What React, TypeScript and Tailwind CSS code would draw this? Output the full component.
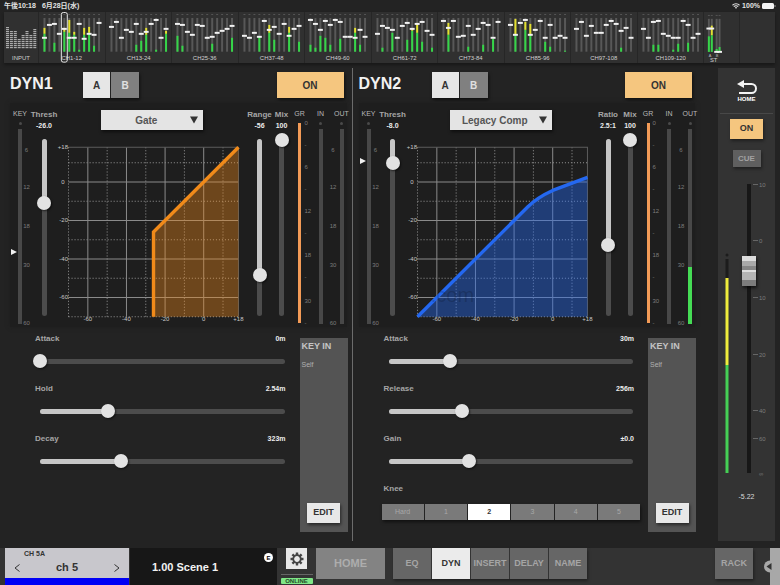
import { useId, useState } from "react";
import type { ReactNode } from "react";

type Level = [green: number, yellow?: number];

interface Bank {
  name: string;
  faders: number[];
  levels: Record<number, Level>;
}

// Fader and level values are heights above the bottom of a 34 px lane.
const banks: Bank[] = [
  { name: "CH1-12", faders: [14, 27, 28, 18, 23, 14, 14, 28, 13, 18, 17, 29], levels: { 0: [18, 24], 2: [9], 4: [20, 24], 5: [19, 32], 6: [17, 20], 7: [2], 8: [17, 24], 9: [19, 25], 10: [6] } },
  { name: "CH13-24", faders: [25, 30, 14, 22, 20, 28, 18, 20, 28, 32, 14, 23], levels: { 5: [7], 6: [11], 7: [17, 24], 9: [2], 11: [18, 21] } },
  { name: "CH25-36", faders: [28, 27, 20, 17, 27, 26, 14, 15, 19, 21, 23, 26], levels: { 0: [16], 1: [6], 7: [8], 11: [14] } },
  { name: "CH37-48", faders: [16, 14, 19, 15, 31, 22, 25, 18, 28, 16, 23, 26], levels: { 3: [15], 5: [19, 27], 6: [12], 9: [19, 25], 11: [10] } },
  { name: "CH49-60", faders: [32, 28, 22, 31, 27, 32, 30, 15, 15, 14, 22, 15], levels: { 0: [7], 1: [4], 2: [16], 3: [14], 4: [7], 6: [13], 9: [19, 24], 10: [7] } },
  { name: "CH61-72", faders: [18, 26, 24, 22, 14, 26, 29, 23, 28, 30, 21, 17], levels: { 1: [4], 3: [19], 6: [12], 7: [21, 23], 8: [19, 29], 9: [10], 11: [4] } },
  { name: "CH73-84", faders: [31, 24, 31, 15, 16, 26, 17, 23, 29, 27, 14, 30], levels: { 1: [17, 29], 5: [5], 8: [7], 10: [13] } },
  { name: "CH85-96", faders: [27, 17, 29, 32, 17, 22, 31, 14, 27, 14, 16, 14], levels: { 1: [17, 33], 3: [22, 30], 4: [17, 28], 7: [10], 8: [5], 11: [1] } },
  { name: "CH97-108", faders: [23, 30, 16, 26, 19, 19, 27, 31, 28, 21, 24, 14], levels: { 9: [4] } },
  { name: "CH109-120", faders: [23, 14, 30, 31, 18, 16, 14, 14, 31, 27, 14, 18], levels: { 2: [7], 3: [7], 6: [2], 7: [8], 9: [9] } },
];

function Lane({ x, fader, level }: { x: number; fader: number; level?: Level }) {
  const green = level ? level[0] : 0;
  const yellow = level && level[1] ? level[1] : 0;
  return (
    <g>
      <rect x={x - 1} y={2} width={2} height={1} fill="#555" />
      <rect x={x - 1} y={6} width={2} height={34} fill="#585858" />
      {yellow > 0 && <rect x={x - 1} y={40 - yellow} width={2} height={yellow - green} fill="#e3e02f" />}
      <rect x={x - 1} y={40 - green} width={2} height={green} fill="#35d648" />
      <rect x={x - 2.5} y={39 - fader} width={5} height={2} fill="#f2f2f2" />
    </g>
  );
}

function BankButton({ bank, selected }: { bank: Bank; selected?: number }) {
  return (
    <button type="button" className="flex min-w-0 flex-1 flex-col items-center border-r border-[#262626] bg-[#303030]">
      <svg viewBox="0 0 66 51" className="w-full" aria-label={bank.name}>
        {bank.faders.map((f, i) => (
          <Lane key={i} x={5.5 + i * 5} fader={f} level={bank.levels[i]} />
        ))}
        <text x="33" y="48" textAnchor="middle" fontSize="6" fill="#cfcfcf">{bank.name}</text>
        {selected !== undefined && (
          <rect x={2.5 + selected * 5} y="0.5" width="6" height="50" rx="2" fill="none" stroke="#e8e8e8" />
        )}
      </svg>
    </button>
  );
}

function InputButton() {
  const stacks = [11, 9, 9, 5, 7, 9, 7, 10];
  return (
    <button type="button" className="w-[35px] shrink-0 border-r border-[#262626] bg-[#303030]">
      <svg viewBox="0 0 34 51" className="w-full" aria-label="INPUT">
        {stacks.map((n, c) =>
          Array.from({ length: n }, (_, r) => (
            <rect key={`${c}-${r}`} x={2 + c * 3.9} y={35 - r * 2} width={3} height={1.2} fill="#aaaaaa" />
          ))
        )}
        <text x="17" y="48" textAnchor="middle" fontSize="6" fill="#cfcfcf">INPUT</text>
      </svg>
    </button>
  );
}

function StereoButton() {
  return (
    <button type="button" className="w-9 shrink-0 border-r border-[#262626] bg-[#303030]">
      <svg viewBox="0 0 36 51" className="w-full" aria-label="ST">
        <Lane x={5} fader={24} level={[16]} />
        <Lane x={8} fader={24} level={[17, 27]} />
        <Lane x={13} fader={0} level={[3]} />
        <Lane x={16} fader={0} level={[5]} />
        <text x="5" y="45" fontSize="4" fill="#bbb">A</text>
        <text x="12" y="45" fontSize="4" fill="#bbb">B</text>
        <text x="10" y="50" textAnchor="middle" fontSize="6" fill="#cfcfcf">ST</text>
      </svg>
    </button>
  );
}

function StatusBar() {
  return (
    <div className="flex h-3 items-center justify-between pr-1 pl-1 text-[7px] leading-3 font-bold text-[#e4e4e4]">
      <div className="flex gap-1.5">
        <span>午後10:18</span>
        <span>6月28日(水)</span>
      </div>
      <div className="flex items-center gap-0.5">
        <svg viewBox="0 0 16 12" className="h-1.5 w-2" fill="none" stroke="#e4e4e4" strokeWidth="2.2">
          <path d="M1 4.5a10 10 0 0 1 14 0M3.6 7.3a6.2 6.2 0 0 1 8.8 0" />
          <path d="M8 11.6 5.8 9.4a3 3 0 0 1 4.4 0z" fill="#e4e4e4" stroke="none" />
        </svg>
        <span>100%</span>
        <svg viewBox="0 0 14 6" className="h-1.5 w-3.5">
          <rect width="12" height="6" rx="1.5" fill="#f4f4f4" />
          <rect x="12.5" y="2" width="1" height="2" fill="#9a9a9a" />
        </svg>
      </div>
    </div>
  );
}

function VSlider({ id, initial }: { id: string; initial: number }) {
  const [value, setValue] = useState(initial);
  return (
    <div className="grid h-[189px] justify-items-center">
      <div className="col-start-1 row-start-1 my-1.5 w-[5px] overflow-hidden rounded-full bg-[#4c4c4c]">
        <div className="w-full bg-[#c6c6c6]" style={{ height: `${value}%` }} />
      </div>
      <input
        id={id}
        type="range"
        min={0}
        max={100}
        value={value}
        onChange={(e) => setValue(Number(e.target.value))}
        className="col-start-1 row-start-1 h-full w-3.5 appearance-none bg-transparent [writing-mode:vertical-lr] [&::-webkit-slider-thumb]:h-3.5 [&::-webkit-slider-thumb]:w-3.5 [&::-webkit-slider-thumb]:appearance-none [&::-webkit-slider-thumb]:rounded-full [&::-webkit-slider-thumb]:bg-[#e2e2e2] [&::-webkit-slider-thumb]:shadow-[1px_1px_2px_#0009]"
      />
    </div>
  );
}

function HSlider({ id, initial }: { id: string; initial: number }) {
  const [value, setValue] = useState(initial);
  return (
    <div className="grid h-3.5 items-center pr-[3px] pl-[11px]">
      <div className="col-start-1 row-start-1 h-[5px] overflow-hidden rounded-full bg-[#4c4c4c]">
        <div className="h-full bg-[#c6c6c6]" style={{ width: `${value}%` }} />
      </div>
      <input
        id={id}
        type="range"
        min={0}
        max={100}
        value={value}
        onChange={(e) => setValue(Number(e.target.value))}
        className="col-start-1 row-start-1 -mx-[7px] h-3.5 w-[calc(100%+14px)] appearance-none bg-transparent [&::-webkit-slider-thumb]:h-3.5 [&::-webkit-slider-thumb]:w-3.5 [&::-webkit-slider-thumb]:appearance-none [&::-webkit-slider-thumb]:rounded-full [&::-webkit-slider-thumb]:bg-[#e2e2e2] [&::-webkit-slider-thumb]:shadow-[1px_1px_2px_#0009]"
      />
    </div>
  );
}

function VParam({ label, value, position, width }: { label: string; value: string; position: number; width: string }) {
  const id = useId();
  return (
    <div className={`flex flex-col items-center pt-1.5 ${width}`}>
      <label htmlFor={id} className="text-[8px] leading-3 font-bold whitespace-nowrap text-[#a6a6a6]">{label}</label>
      <output htmlFor={id} className="mb-0.5 text-[7px] leading-[10px] font-bold whitespace-nowrap text-[#ececec]">{value}</output>
      <VSlider id={id} initial={position} />
    </div>
  );
}

function HParam({ label, value, position }: { label: string; value: string; position: number }) {
  const id = useId();
  return (
    <div className="flex flex-col gap-2.5">
      <div className="flex h-2.5 items-center justify-between pr-0.5 pl-1.5 font-bold">
        <label htmlFor={id} className="text-[8px] leading-[10px] text-[#a6a6a6]">{label}</label>
        <output htmlFor={id} className="text-[7px] leading-[10px] text-[#ececec]">{value}</output>
      </div>
      <HSlider id={id} initial={position} />
    </div>
  );
}

function Meter({ label, width, level = 0 }: { label: string; width: string; level?: number }) {
  return (
    <div className={`flex flex-col items-center pt-1.5 ${width}`}>
      <span className="flex w-0 justify-center text-[7px] leading-[10px] whitespace-nowrap text-[#b8b8b8]">{label}</span>
      <span className="mt-[3px] size-[3px] rounded-full bg-[#4a4a4a]" />
      <div className="mt-1 flex h-[195px] w-1 flex-col justify-end bg-[#484848]">
        <div className="bg-[#45dc55]" style={{ height: `${level}%` }} />
      </div>
    </div>
  );
}

function GainReduction() {
  return (
    <div className="flex w-2 flex-col items-center pt-1.5">
      <span className="flex w-0 justify-center text-[7px] leading-[10px] text-[#b8b8b8]">GR</span>
      <div className="mt-1 h-[200px] w-[3px] bg-[#f39b57]" />
    </div>
  );
}

// Tick captions, with y measured from the top of the meter panel.
const levelScale: [string, number][] = [["6", 47], ["12", 84], ["18", 123], ["30", 162], ["60", 220]];
const grScale: [string, number][] = [
  ["0", 20], ["-", 42], ["6", 64], ["-", 86], ["12", 108], ["-", 130], ["18", 152], ["-", 174], ["30", 198], ["-", 220],
];

function Scale({ marks, width, anchor }: { marks: [string, number][]; width: string; anchor: "start" | "middle" }) {
  return (
    <svg viewBox="0 0 8 224" className={`h-[224px] shrink-0 overflow-visible ${width}`}>
      {marks.map(([text, y]) => (
        <text key={y} x={anchor === "start" ? 0 : 4} y={y + 2} textAnchor={anchor} fontSize="6" fill="#7c7c7c">{text}</text>
      ))}
    </svg>
  );
}

const gx = (db: number) => 11.5 + (db + 70) * 1.926;
const gy = (db: number) => 5.3 + (18 - db) * 1.92;

const gateLine = `M${gx(-26)} ${gy(-70)}V${gy(-26)}L${gx(18)} ${gy(18)}`;
const compLine = `M${gx(-70)} ${gy(-70)}L${gx(-13)} ${gy(-13)}Q${gx(-8)} ${gy(-8)} ${gx(0)} ${gy(-4.4)}L${gx(18)} ${gy(2.4)}`;

function TransferGraph({ line, color, fade, watermark }: { line: string; color: string; fade: number; watermark?: string }) {
  const major = [0, -20, -40, -60];
  const minor = [10, -10, -30, -50, -70];
  const left = gx(-70);
  const right = gx(18);
  const top = gy(18);
  const bottom = gy(-70);
  return (
    <svg viewBox="0 0 190 182" className="w-full" fontSize="6" fill="#c8c8c8">
      <g stroke="#989898" strokeDasharray="1 2">
        {minor.map((db) => (
          <path key={db} fill="none" d={`M${left} ${gy(db)}H${right}M${gx(db)} ${top}V${bottom}`} />
        ))}
      </g>
      <g stroke="#8a8a8a">
        {major.map((db) => (
          <path key={db} d={`M${left} ${gy(db)}H${right}M${gx(db)} ${top}V${bottom}`} />
        ))}
        <path d={`M${left} ${top}H${right}V${bottom}`} fill="none" stroke="#5c5c5c" />
      </g>
      <path d={`${line}V${bottom}H${left}z`} fill={color} fillOpacity={fade} />
      <path d={line} fill="none" stroke={color} strokeWidth="3.4" />
      {watermark && (
        <text x="68" y="160" textAnchor="end" fontSize="20" fill="#000" fillOpacity="0.18">{watermark}</text>
      )}
      {[18, ...major].map((db) => (
        <text key={db} x={db === 0 ? 7.5 : 11} y={gy(db) + 2} textAnchor="end">{db > 0 ? `+${db}` : db}</text>
      ))}
      {[18, ...major].map((db) => (
        <text key={db} x={gx(db)} y="179" textAnchor="middle">{db > 0 ? `+${db}` : db}</text>
      ))}
    </svg>
  );
}

interface DynProps {
  title: string;
  type: string;
  keyArrow: number;
  verticals: [string, string, number][];
  horizontals: [string, string, number][];
  out: number;
  graph: ReactNode;
  children?: ReactNode;
  className?: string;
}

function DynModule({ title, type, keyArrow, verticals, horizontals, out, graph, children, className = "" }: DynProps) {
  const [thresh, second, mix] = verticals;
  return (
    <section className={`flex min-w-0 flex-1 flex-col pt-1 pb-[9px] ${className}`}>
      <header className="flex h-[26px] items-stretch pr-2 pl-1.5 font-bold">
        <h2 className="w-[73px] text-[16px] leading-6 text-[#f2f2f2]">{title}</h2>
        <div className="flex gap-px text-[10px] shadow-[1px_2px_3px_#0008]">
          <button type="button" className="w-[27px] bg-[#e6e6e6] text-[#333]">A</button>
          <button type="button" className="w-7 bg-[#808080] text-[#e0e0e0]">B</button>
        </div>
        <button type="button" className="ml-auto w-[67px] bg-[#f5c67f] text-[10px] text-[#333] shadow-[1px_2px_3px_#0008]">ON</button>
      </header>

      <div className="mt-[5px] mr-[5px] ml-1.5 flex h-[224px] bg-[#1e1e1e] shadow-[0_0_4px_#1e1e1e]">
        <svg viewBox="0 0 8 224" className="h-[224px] w-2 shrink-0">
          <path d={`M1 ${keyArrow - 3}L7 ${keyArrow}L1 ${keyArrow + 3}z`} fill="#f0f0f0" />
        </svg>
        <Meter label="KEY" width="w-1" />
        <Scale marks={levelScale} width="w-[9px]" anchor="middle" />
        <VParam label={thresh[0]} value={thresh[1]} position={thresh[2]} width="w-[26px]" />
        <div className="flex min-w-0 flex-1 flex-col items-center pt-[7px]">
          <div className="grid h-5 w-[102px] items-center bg-[#e4e4e4] shadow-[1px_2px_3px_#0008]">
            <select
              aria-label={`${title} type`}
              defaultValue={type}
              className="col-start-1 row-start-1 h-5 w-full appearance-none bg-transparent pr-3 text-[10px] font-bold text-[#555] [text-align-last:center]"
            >
              <option>Gate</option>
              <option>Legacy Comp</option>
            </select>
            <svg viewBox="0 0 8 8" className="pointer-events-none col-start-1 row-start-1 mr-[5px] size-2 justify-self-end">
              <path d="M0 0.5h8L4 7.5z" fill="#333" />
            </svg>
          </div>
          <div className="mt-3 w-full">{graph}</div>
        </div>
        <VParam label={second[0]} value={second[1]} position={second[2]} width="w-6" />
        <VParam label={mix[0]} value={mix[1]} position={mix[2]} width="mr-1 w-5" />
        <GainReduction />
        <Scale marks={grScale} width="w-[9px]" anchor="start" />
        <Meter label="IN" width="w-4" />
        <Scale marks={levelScale} width="w-2" anchor="middle" />
        <Meter label="OUT" width="w-2.5" level={out} />
      </div>

      <div className="mt-[7px] mr-1 flex flex-1 gap-[9px] pl-[25px]">
        <div className="flex min-w-0 flex-1 flex-col gap-4">
          {horizontals.map(([label, value, position]) => (
            <HParam key={label} label={label} value={value} position={position} />
          ))}
          {children}
        </div>
        <aside className="mt-1 ml-[3px] flex w-12 flex-col justify-between bg-[#545454] pb-[9px]">
          <div className="px-0.5 pt-0.5">
            <h3 className="text-[9px] leading-3 font-bold text-[#c4c4c4]">KEY IN</h3>
            <p className="mt-2 text-[7px] leading-[10px] text-[#b0b0b0]">Self</p>
          </div>
          <button type="button" className="h-5 w-[33px] self-center bg-[#e8e8e8] text-[9px] font-bold text-[#333] shadow-[1px_2px_3px_#0008]">EDIT</button>
        </aside>
      </div>
    </section>
  );
}

function Knee() {
  const [knee, setKnee] = useState("2");
  return (
    <div className="flex flex-col gap-2.5" role="group" aria-label="Knee">
      <span className="pl-1.5 text-[8px] leading-[10px] font-bold text-[#a6a6a6]">Knee</span>
      <div className="-mr-1 ml-1 flex h-4 gap-px shadow-[1px_2px_3px_#0008]">
        {["Hard", "1", "2", "3", "4", "5"].map((k) => (
          <button
            key={k}
            type="button"
            aria-pressed={k === knee}
            onClick={() => setKnee(k)}
            className={`flex-1 text-[7px] ${k === knee ? "bg-white font-bold text-[#333]" : "bg-[#7a7a7a] text-[#a8a8a8]"}`}
          >
            {k}
          </button>
        ))}
      </div>
    </div>
  );
}

const faderScale: [string, number][] = [["10", 15], ["0", 71], ["10", 128], ["20", 185], ["40", 241], ["60", 269], ["∞", 304]];

function ChannelStrip() {
  const [value, setValue] = useState(30);
  return (
    <aside className="mr-[5px] ml-[18px] flex w-[57px] shrink-0 flex-col items-center bg-[#333]">
      <button type="button" className="flex h-[46px] w-[53px] flex-col items-center border-b border-[#484848] pt-3 text-[6px] leading-[7px] font-bold text-white">
        <svg viewBox="0 0 20 15" className="mb-px h-[15px] w-5" fill="none" stroke="#f4f4f4" strokeWidth="2">
          <path d="M5 4h9.5a4.500 4.500 0 0 1 0 9H2" />
          <path d="M0 4 7 0v8z" fill="#f4f4f4" stroke="none" />
        </svg>
        HOME
      </button>
      <button type="button" className="mt-[5px] h-5 w-[33px] bg-[#f5c67f] text-[9px] font-bold text-[#333] shadow-[1px_2px_3px_#0006]">ON</button>
      <button type="button" className="mt-[11px] h-[17px] w-7 bg-[#5f5f5f] text-[8px] font-bold text-[#a2a2a2] shadow-[1px_2px_3px_#0006]">CUE</button>
      <div className="mt-0.5 flex h-[319px] w-full pl-[7px]">
        <svg viewBox="0 0 4 319" className="h-[319px] w-1 shrink-0">
          <circle cx="2" cy="86" r="1.5" fill="#1c1c1c" />
          <rect x="0.5" y="90" width="3" height="19" fill="#1c1c1c" />
          <rect x="0.5" y="109" width="3" height="87" fill="#f0ec3c" />
          <rect x="0.5" y="196" width="3" height="108" fill="#45cf55" />
        </svg>
        <div className="ml-3 grid w-4 justify-items-center">
          <div className="col-start-1 row-start-1 my-[15px] w-1 bg-[#171717]" />
          <input
            type="range"
            aria-label="Channel level"
            min={0}
            max={100}
            value={value}
            onChange={(e) => setValue(Number(e.target.value))}
            className="col-start-1 row-start-1 h-[319px] w-3.5 appearance-none bg-transparent [writing-mode:vertical-lr] [&::-webkit-slider-thumb]:h-[30px] [&::-webkit-slider-thumb]:w-3.5 [&::-webkit-slider-thumb]:appearance-none [&::-webkit-slider-thumb]:bg-[linear-gradient(#dcdcdc_0_5px,#a9a9a9_5px_10px,#868686_10px_14px,#dedede_14px_16px,#b4b4b4_16px_24px,#7c7c7c_24px)] [&::-webkit-slider-thumb]:shadow-[1px_2px_3px_#000a]"
          />
        </div>
        <svg viewBox="0 0 16 319" className="-ml-1 h-[319px] w-4 shrink-0">
          {faderScale.map(([text, y]) => (
            <g key={y}>
              {text !== "∞" && <path d={`M0 ${y}.5h5`} stroke="#666" />}
              <text x="6" y={y + 3} fontSize="6" fill="#7c7c7c">{text}</text>
            </g>
          ))}
        </svg>
      </div>
      <output className="mt-1 text-[7px] leading-[10px] text-[#dadada]">-5.22</output>
    </aside>
  );
}

function Footer() {
  const [tab, setTab] = useState("DYN");
  return (
    <footer className="flex h-[37px] shrink-0 bg-[#333] pl-[5px] font-bold">
      <div className="flex w-[124px] flex-col border-b-[7px] border-[#0000f5] bg-[#c8c7cc] text-[#333]">
        <div className="pl-[19px] text-[7px] leading-3">CH 5A</div>
        <div className="flex h-[15px] items-center justify-between px-[9px] text-[11px] leading-[15px]">
          <button type="button" aria-label="Previous channel">
            <svg viewBox="0 0 6 8" className="h-2 w-1.5" fill="none" stroke="#333"><path d="M5.5 .5 1 4l4.500 3.500" /></svg>
          </button>
          <span>ch 5</span>
          <button type="button" aria-label="Next channel">
            <svg viewBox="0 0 6 8" className="h-2 w-1.5" fill="none" stroke="#333"><path d="M.5 .5 5 4 .5 7.500" /></svg>
          </button>
        </div>
      </div>
      <button type="button" className="flex w-[148px] items-start justify-between border-l border-[#333] bg-[#171717] pr-1 pl-[22px] text-[11px] text-[#f2f2f2]">
        <span className="pt-2.5 leading-[18px]">1.00 Scene 1</span>
        <span className="mt-[5px] flex size-[9px] items-center justify-center rounded-full bg-white text-[6px] leading-none text-black">E</span>
      </button>
      <div className="ml-[3px] flex w-[33px] flex-col items-center">
        <button type="button" aria-label="Setup" className="flex h-[21px] w-[21px] shrink-0 items-center justify-center bg-[#e8e8e8]">
          <svg viewBox="-7 -7 14 14" className="size-3.5">
            {[0, 45, 90, 135, 180, 225, 270, 315].map((a) => (
              <rect key={a} x="-1.2" y="-6.500" width="2.400" height="3" fill="#444" transform={`rotate(${a})`} />
            ))}
            <circle r="3.800" fill="none" stroke="#444" strokeWidth="1.800" />
          </svg>
        </button>
        <div className="mt-[5px] h-px w-8 shrink-0 bg-[#666]" />
        <div className="mt-[3px] h-1.5 w-8 shrink-0 rounded-[1px] bg-[#7fe787] text-center text-[6px] leading-[7px] text-[#264a28]">ONLINE</div>
      </div>
      <button type="button" className="ml-[3px] h-[31px] w-[69px] bg-[#838383] text-[11px] text-[#adadad]">HOME</button>
      <nav className="ml-2 flex h-[31px] gap-px text-[9px] shadow-[1px_2px_3px_#0006]">
        {["EQ", "DYN", "INSERT", "DELAY", "NAME"].map((t) => (
          <button
            key={t}
            type="button"
            aria-pressed={t === tab}
            onClick={() => setTab(t)}
            className={`w-[38px] ${t === tab ? "bg-[#ebebeb] text-[#333]" : "bg-[#666] text-[#a5a5a5]"}`}
          >
            {t}
          </button>
        ))}
      </nav>
      <button type="button" className="mr-[11px] ml-auto h-[31px] w-[38px] bg-[#666] text-[9px] text-[#a5a5a5] shadow-[1px_2px_3px_#0006]">RACK</button>
      <button type="button" aria-label="Open side panel" className="w-4">
        <svg viewBox="0 0 16 37" className="h-[37px] w-4">
          <rect x="6" width="10" height="37" fill="#a8a8a8" />
          <circle cx="6" cy="18.500" r="6" fill="#a8a8a8" />
          <path d="M2.500 18.500 7.500 15v7z" fill="#333" />
        </svg>
      </button>
    </footer>
  );
}

export default function App() {
  return (
    <div className="flex min-h-screen flex-col bg-[#232323] font-['Liberation_Sans','Noto_Sans_CJK_JP',sans-serif]">
      <StatusBar />
      <nav className="mr-[5px] ml-1 flex h-[51px] overflow-hidden bg-[#303030] shadow-[0_2px_3px_#0005]">
        <InputButton />
        {banks.map((bank, i) => (
          <BankButton key={bank.name} bank={bank} selected={i === 0 ? 4 : undefined} />
        ))}
        <StereoButton />
        <div className="w-[35px] shrink-0" />
      </nav>

      <main className="flex flex-1 pt-[5px] pb-[7px] pl-1">
        <DynModule
          title="DYN1"
          type="Gate"
          keyArrow={149}
          verticals={[["Thresh", "-26.0", 36], ["Range", "-56", 77], ["Mix", "100", 0]]}
          horizontals={[["Attack", "0m", 0], ["Hold", "2.54m", 28], ["Decay", "323m", 33]]}
          out={0}
          graph={<TransferGraph line={gateLine} color="#f08a1a" fade={0.38} />}
          className="border-r border-[#6c6c6c]"
        />
        <DynModule
          title="DYN2"
          type="Legacy Comp"
          keyArrow={58}
          verticals={[["Thresh", "-8.0", 13], ["Ratio", "2.5:1", 60], ["Mix", "100", 0]]}
          horizontals={[["Attack", "30m", 25], ["Release", "256m", 30], ["Gain", "±0.0", 33]]}
          out={29}
          graph={<TransferGraph line={compLine} color="#2468f0" fade={0.42} watermark=".com" />}
        >
          <Knee />
        </DynModule>
        <ChannelStrip />
      </main>

      <Footer />
    </div>
  );
}
